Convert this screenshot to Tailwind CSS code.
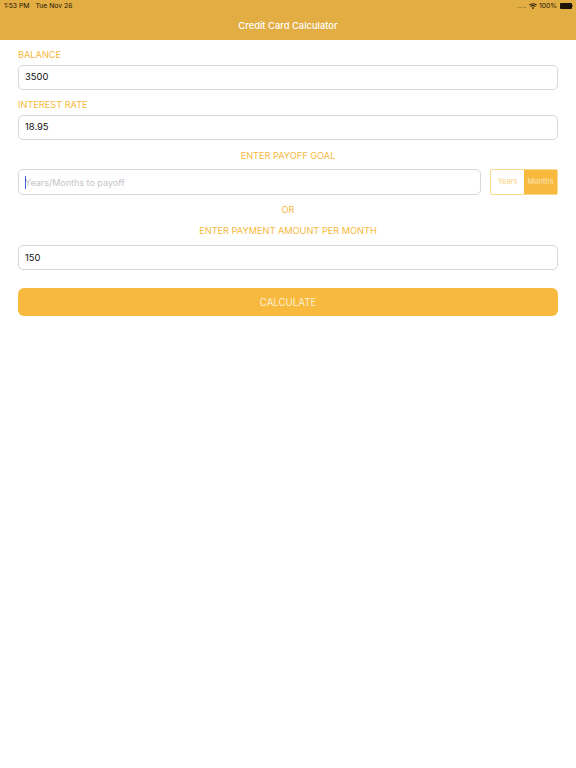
<!doctype html>
<html>
<head>
<meta charset="utf-8">
<script src="https://cdn.jsdelivr.net/npm/@tailwindcss/browser@4"></script>
</head>
<body class="bg-white font-['Inter','Liberation_Sans',sans-serif] w-[576px] h-[768px] overflow-hidden">
<header class="bg-[#e2ad42] h-10 flex flex-col relative">
  <div class="h-[12px] flex items-center justify-between pl-1 pr-[3px] text-[6.8px] leading-none text-[#1c1608]">
    <div class="flex gap-[6px] mt-px"><span>1:53 PM</span><span>Tue Nov 26</span></div>
    <div class="flex items-center mt-px">
      <span class="flex gap-[1px] mr-[3px] mt-[3px]"><i class="w-[1.5px] h-[1px] bg-[#a08436]"></i><i class="w-[1.5px] h-[1px] bg-[#a08436]"></i><i class="w-[1.5px] h-[1px] bg-[#a08436]"></i><i class="w-[1.5px] h-[1px] bg-[#a08436]"></i></span>
      <svg width="8" height="6.500" viewBox="0 0 18 14" class="mr-[2px]"><path d="M9 13.5 6.4 10.6a3.7 3.7 0 0 1 5.2 0z M4.6 8.8 3 7a8.6 8.6 0 0 1 12 0l-1.6 1.8a6.2 6.2 0 0 0-8.800 0z M1.600 5.500 0 3.700a13 13 0 0 1 18 0l-1.600 1.800a10.600 10.600 0 0 0-14.800 0z" fill="#1c1608"/></svg>
      <span>100%</span>
      <span class="ml-[3px] w-[12px] h-[6px] bg-[#1c1608] rounded-[1px]"></span>
      <span class="w-px h-[2px] bg-[#7a6026]"></span>
    </div>
  </div>
  <h1 class="text-white text-[9.4px] font-medium text-center leading-none mt-[8px] pt-px">Credit Card Calculator</h1>
</header>
<main class="px-[18px] text-[#f7b93e] text-[9.2px] leading-none">
  <label class="block mt-[10px] h-[10px]">BALANCE</label>
  <div class="mt-[5px] h-[25px] rounded-[5px] border-[1.5px] border-[#d8d8d8] px-[6px] pb-px flex items-center text-[9.4px] text-[#111]">3500</div>
  <label class="block mt-[10px] h-[10px]">INTEREST RATE</label>
  <div class="mt-[5px] h-[25px] rounded-[5px] border-[1.5px] border-[#d8d8d8] px-[6px] pb-px flex items-center text-[9.4px] text-[#111]">18.95</div>
  <p class="mt-[10.500px] h-[10px] text-center">ENTER PAYOFF GOAL</p>
  <div class="mt-[8.500px] flex items-center justify-between">
    <div class="w-[463px] h-[26px] rounded-[5px] border-[1.5px] border-[#d8d8d8] px-[6px] pt-px flex items-center text-[9px] text-[#c4c4c6] relative">
      <span class="absolute left-[5.5px] top-[5.5px] w-px h-[13px] bg-[#3f63d8]"></span>
      <span>Years/Months to payoff</span>
    </div>
    <div class="w-[68px] h-[26px] flex rounded-[2px] border border-[#fbd98f] text-[7.4px]">
      <span class="w-[33px] flex items-center justify-center text-[#f9cf7c]">Years</span>
      <span class="flex-1 flex items-center justify-center bg-[#f7b93e] text-[#fde7bb]">Months</span>
    </div>
  </div>
  <p class="mt-[10px] h-[10px] text-center">OR</p>
  <p class="mt-[11px] h-[10px] text-center">ENTER PAYMENT AMOUNT PER MONTH</p>
  <div class="mt-[9px] h-[25px] rounded-[5px] border-[1.5px] border-[#d8d8d8] px-[6px] flex items-center text-[9.4px] text-[#111]">150</div>
  <button class="mt-[18px] w-full h-[28px] pt-px rounded-[6px] bg-[#f7b93e] text-[#fdf0d5] text-[9.7px] flex items-center justify-center">CALCULATE</button>
</main>
</body>
</html>
